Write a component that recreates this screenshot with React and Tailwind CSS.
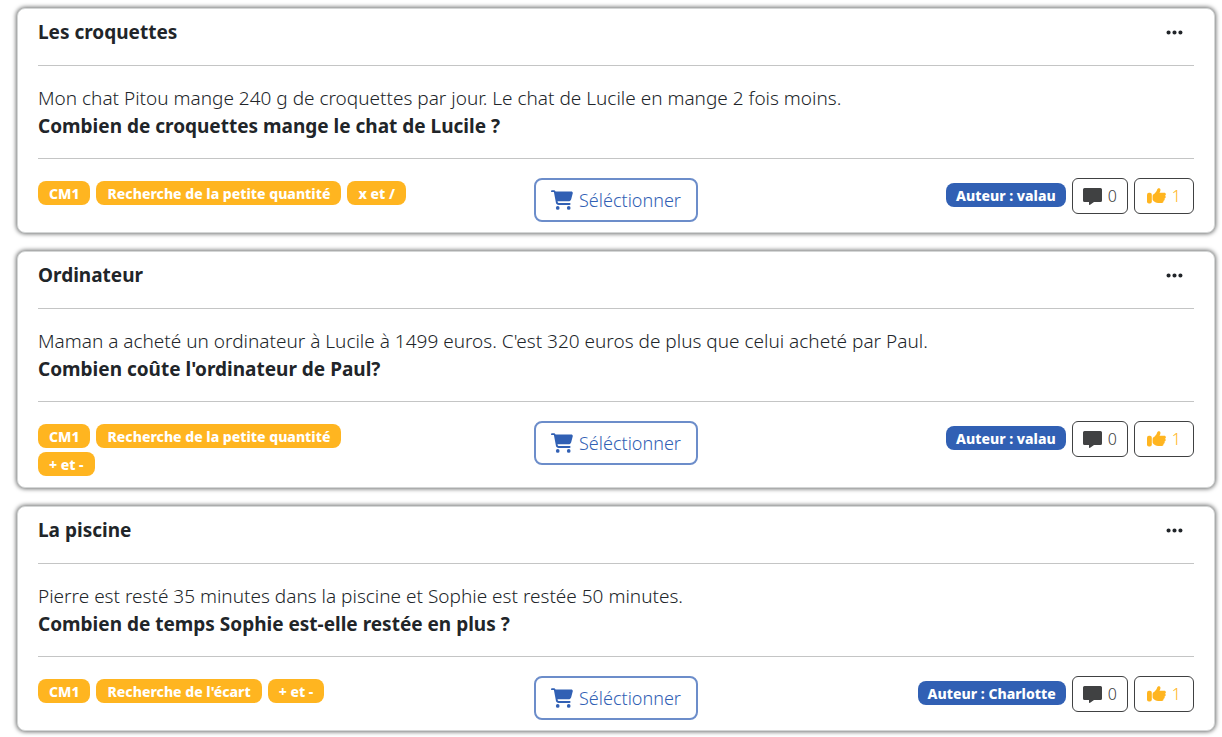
import React from "react";
import { FaCartShopping, FaEllipsis } from "react-icons/fa6";

const problems = [
    {
        title: "Les croquettes",
        text: "Mon chat Pitou mange 240 g de croquettes par jour. Le chat de Lucile en mange 2 fois moins.",
        question: "Combien de croquettes mange le chat de Lucile ?",
        tags: [["CM1", "Recherche de la petite quantité", "x et /"]],
        author: "valau",
        comments: 0,
        likes: 1,
    },
    {
        title: "Ordinateur",
        text: "Maman a acheté un ordinateur à Lucile à 1499 euros. C'est 320 euros de plus que celui acheté par Paul.",
        question: "Combien coûte l'ordinateur de Paul?",
        tags: [["CM1", "Recherche de la petite quantité"], ["+ et -"]],
        author: "valau",
        comments: 0,
        likes: 1,
    },
    {
        title: "La piscine",
        text: "Pierre est resté 35 minutes dans la piscine et Sophie est restée 50 minutes.",
        question: "Combien de temps Sophie est-elle restée en plus ?",
        tags: [["CM1", "Recherche de l'écart", "+ et -"]],
        author: "Charlotte",
        comments: 0,
        likes: 1,
    },
];

function CommentIcon() {
    return (
        <svg width="19" height="17" viewBox="0 0 19 17" fill="currentColor" aria-hidden="true">
            <path d="M1.5 0h16A1.5 1.5 0 0 1 19 1.5v11a1.5 1.5 0 0 1-1.5 1.5H11l-3.9 2.8c-.5.4-1.1.1-1.1-.5V14H1.5A1.5 1.5 0 0 1 0 12.5v-11A1.5 1.5 0 0 1 1.5 0z" />
        </svg>
    );
}

function LikeIcon() {
    return (
        <svg width="19" height="16" viewBox="0 0 19 16" fill="currentColor" aria-hidden="true">
            <rect x="0" y="4.8" width="4.8" height="10.7" rx="1.9" />
            <path d="M5.6 8.2c0-.8.3-1.4.9-1.9 1.7-1.3 2.9-2.5 3.6-4.6C10.5.5 11.3 0 12.2.3c1 .3 1.5 1.2 1.2 2.2-.2.8-.5 1.6-.9 2.3h4.8c.9 0 1.6.7 1.6 1.5 0 .6-.3 1.1-.8 1.4.4.3.6.7.6 1.2 0 .8-.5 1.4-1.2 1.5.1.2.2.5.2.8 0 .8-.5 1.4-1.2 1.6.1 1.4-.5 2.2-1.7 2.2h-3.7c-1 0-2-.3-2.8-.8l-1.5-.9c-.7-.5-1.2-1.3-1.2-2.2z" />
        </svg>
    );
}

function Badge({ className, children }) {
    return (
        <span className={`h-6 rounded-lg pt-px text-sm leading-6 font-extrabold whitespace-nowrap text-white ${className}`}>
            {children}
        </span>
    );
}

function ProblemCard({ problem }) {
    return (
        <article className="rounded-lg border border-[#d4d6d6] bg-white px-5 pt-[9px] pb-[10px] shadow-[0_0_4px_1px_#707272]">
            <div className="flex items-center justify-between pr-[10px] pb-[19px]">
                <h2 className="text-[19px] leading-7 font-bold">{problem.title}</h2>
                <button type="button" aria-label="Options">
                    <FaEllipsis size={19} />
                </button>
            </div>
            <div className="border-y border-[#c4c5c5] py-[18px] text-[19px] leading-7">
                <p className="font-light">{problem.text}</p>
                <p className="font-bold">{problem.question}</p>
            </div>
            <div className="grid grid-cols-3 items-start pt-[19px]">
                <div className="flex flex-col gap-1 pt-[3px] pb-px">
                    {problem.tags.map((row, i) => (
                        <div key={i} className="flex gap-[6px]">
                            {row.map((tag) => (
                                <Badge key={tag} className="bg-[#ffb520] px-[11px]">{tag}</Badge>
                            ))}
                        </div>
                    ))}
                </div>
                <button type="button" className="flex h-11 items-center gap-[6px] justify-self-center rounded-lg border-2 border-[#6c8dca] px-[15px] text-lg font-light text-[#3160b4]">
                    <FaCartShopping size={22} />
                    Séléctionner
                </button>
                <div className="flex justify-end gap-[6px]">
                    <Badge className="mt-[5px] bg-[#3160b4] px-[10px]">Auteur : {problem.author}</Badge>
                    <button type="button" aria-label="Commentaires" className="flex h-9 items-center gap-[6px] rounded-md border border-[#404142] px-[10px] text-base font-light text-[#404142]">
                        <CommentIcon />
                        {problem.comments}
                    </button>
                    <button type="button" aria-label="J'aime" className="flex h-9 items-center gap-[6px] rounded-md border border-[#404142] px-3 text-base font-light text-[#ffb520]">
                        <LikeIcon />
                        {problem.likes}
                    </button>
                </div>
            </div>
        </article>
    );
}

function App() {
    return (
        <main className="flex flex-col gap-[18px] bg-white py-2 pr-[7px] pl-[17px] font-['Noto_Sans','Open_Sans',sans-serif] text-[#212529]">
            {problems.map((problem) => (
                <ProblemCard key={problem.title} problem={problem} />
            ))}
        </main>
    );
}

export default App;
